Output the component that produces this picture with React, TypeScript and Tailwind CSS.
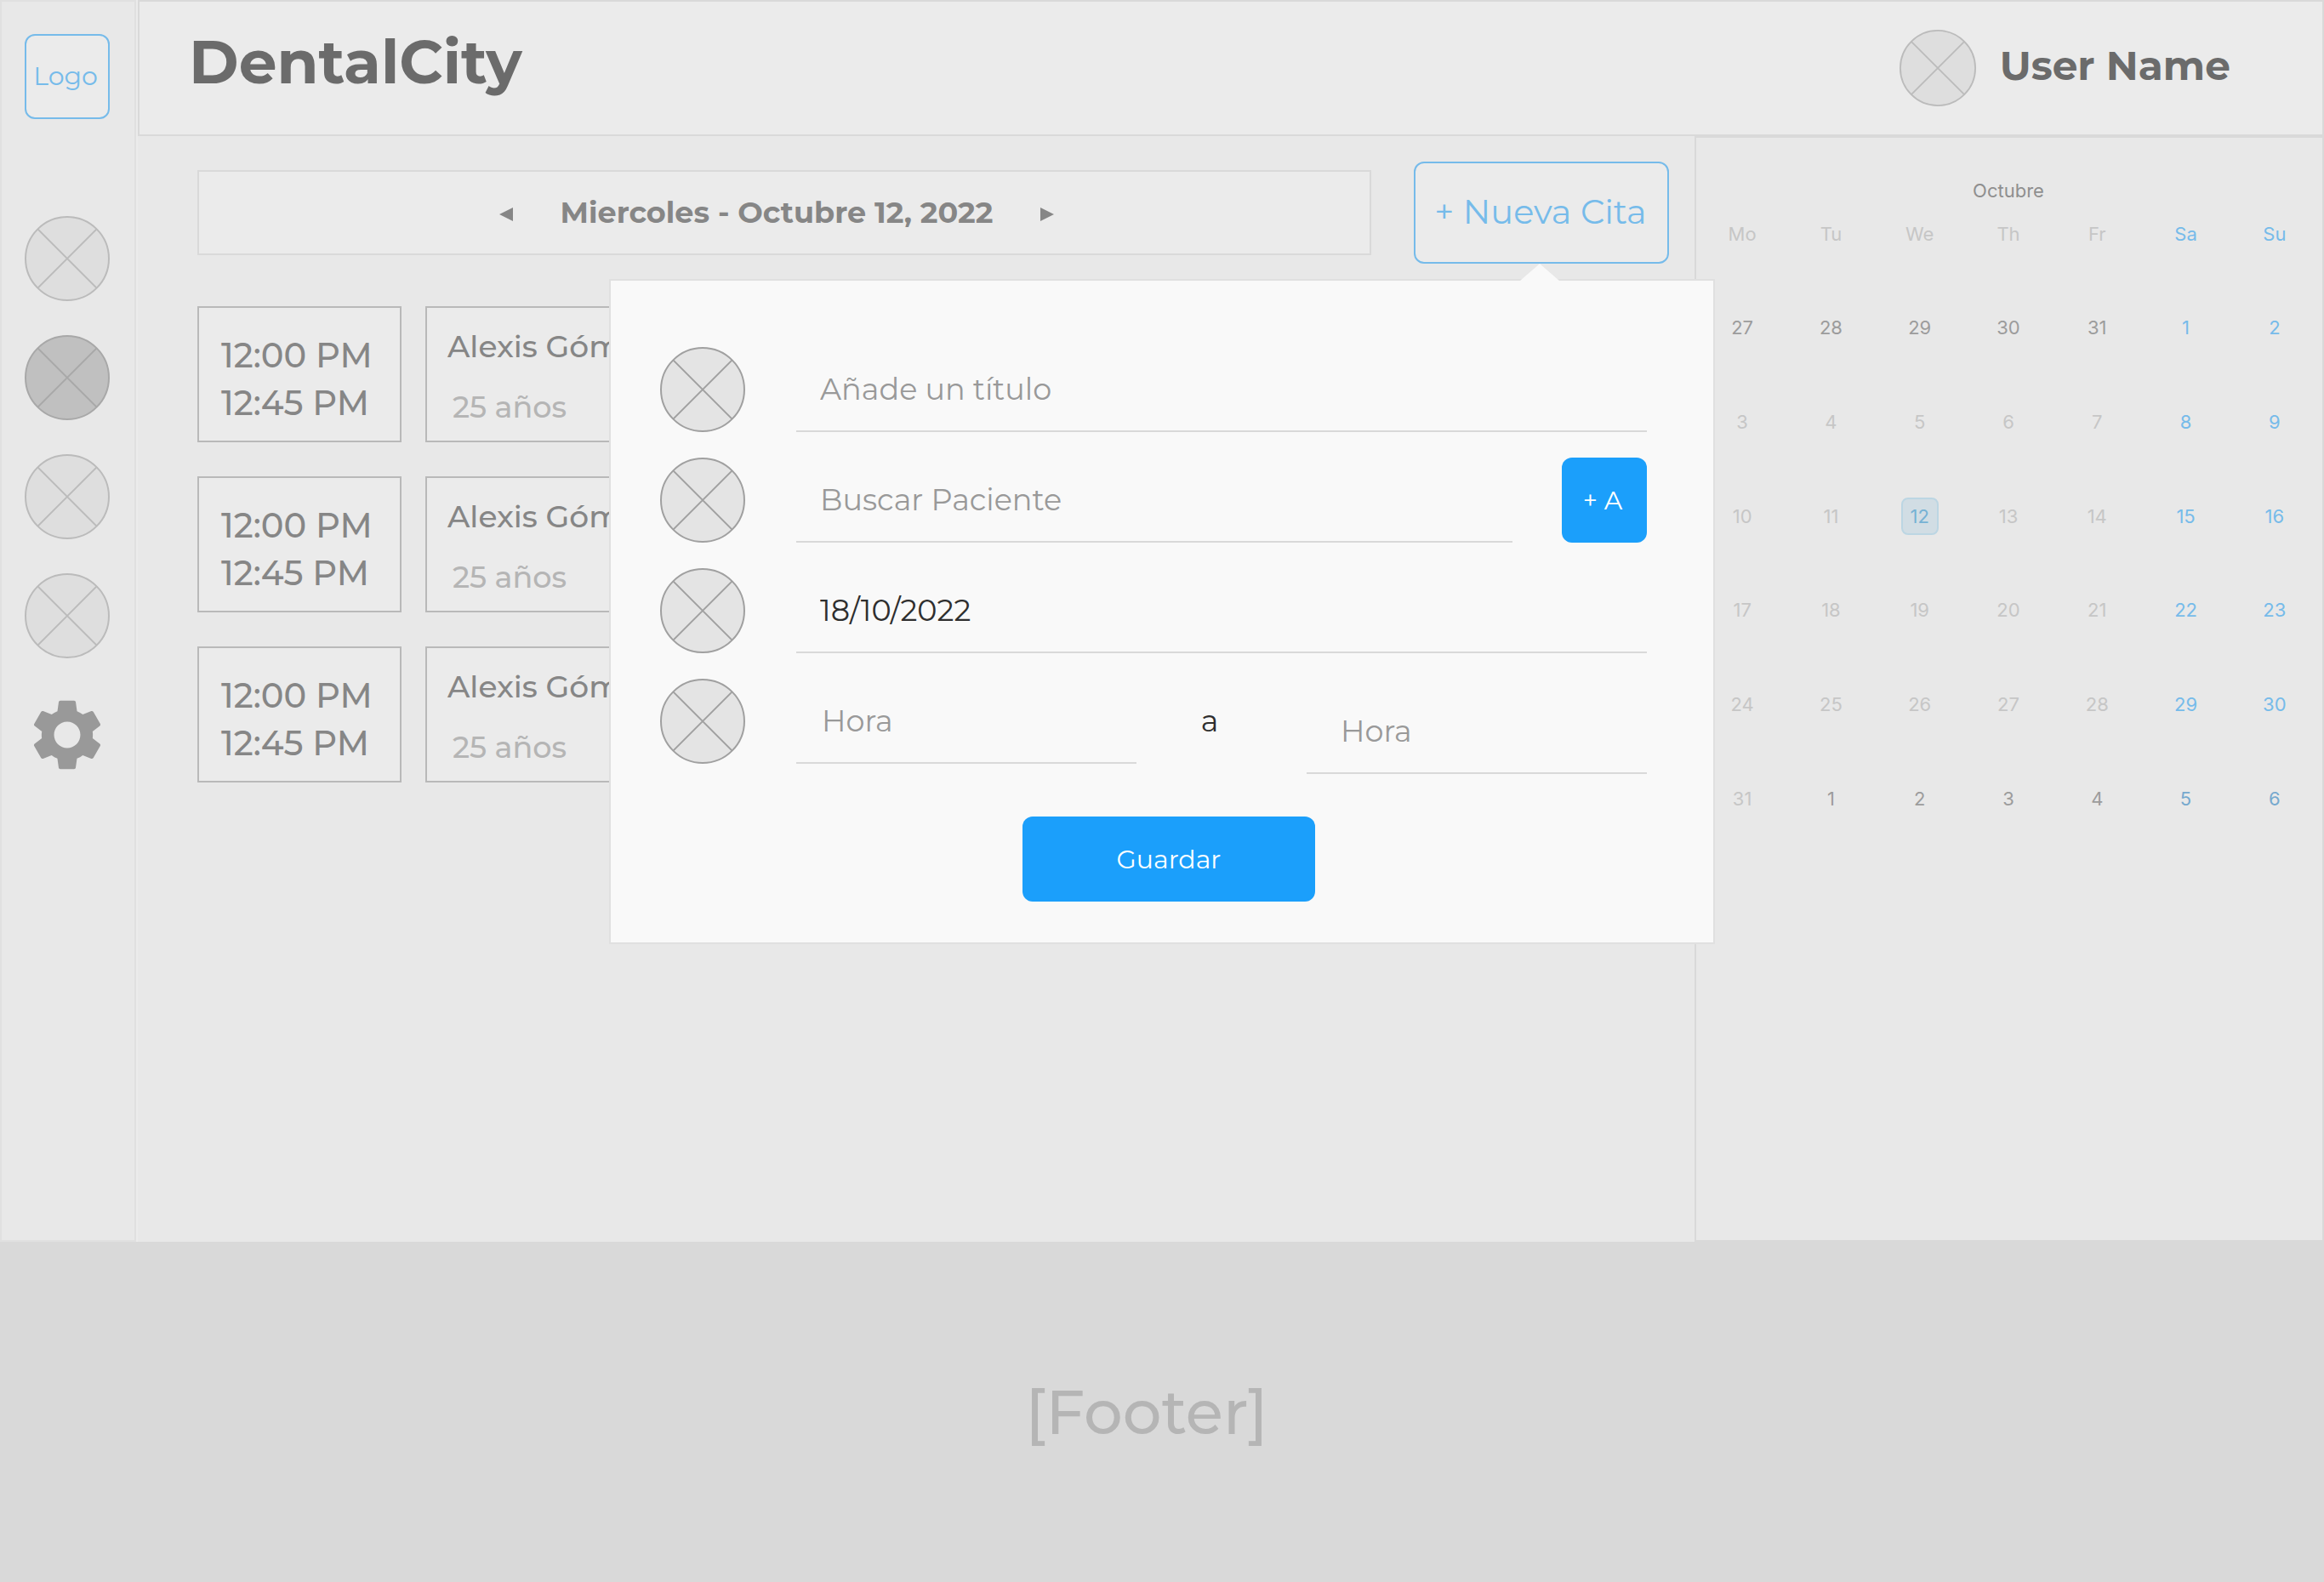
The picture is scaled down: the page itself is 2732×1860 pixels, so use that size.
import React from "react";

type Tone = "muted" | "active" | "form";

const tones: Record<Tone, { fill: string; stroke: string }> = {
  muted: { fill: "#dedede", stroke: "#bbbbbb" },
  active: { fill: "#c0c0c0", stroke: "#a8a8a8" },
  form: { fill: "#e4e4e4", stroke: "#a0a0a0" },
};

function CrossCircle({ tone, className }: { tone: Tone; className: string }) {
  const { fill, stroke } = tones[tone];
  return (
    <svg viewBox="0 0 100 100" className={className} aria-hidden="true">
      <circle cx="50" cy="50" r="49" fill={fill} stroke={stroke} strokeWidth="2" />
      <path d="M15.4 15.4 84.6 84.6M84.6 15.4 15.4 84.6" stroke={stroke} strokeWidth="2" fill="none" />
    </svg>
  );
}

function Gear() {
  return (
    <svg viewBox="2.2 2 19.6 20" className="h-[84px] w-[82px]" fill="#999999" aria-hidden="true">
      <path d="M19.14 12.94c.04-.3.06-.61.06-.94 0-.32-.02-.64-.07-.94l2.03-1.58c.18-.14.23-.41.12-.61l-1.92-3.32c-.12-.22-.37-.29-.59-.22l-2.39.96c-.5-.38-1.03-.7-1.62-.94l-.36-2.54c-.04-.24-.24-.41-.48-.41h-3.84c-.24 0-.43.17-.47.41l-.36 2.54c-.59.24-1.13.57-1.62.94l-2.39-.96c-.22-.08-.47 0-.59.22L2.74 8.87c-.12.21-.08.47.12.61l2.03 1.58c-.05.3-.09.63-.09.94s.02.64.07.94l-2.03 1.58c-.18.14-.23.41-.12.61l1.92 3.32c.12.22.37.29.59.22l2.39-.96c.5.38 1.03.7 1.62.94l.36 2.54c.05.24.24.41.48.41h3.84c.24 0 .44-.17.47-.41l.36-2.54c.59-.24 1.13-.56 1.62-.94l2.39.96c.22.08.47 0 .59-.22l1.92-3.32c.12-.22.07-.47-.12-.61l-2.01-1.58zM12 15.7c-2.04 0-3.7-1.66-3.7-3.7s1.66-3.7 3.7-3.7 3.7 1.66 3.7 3.7-1.66 3.7-3.7 3.7z" />
    </svg>
  );
}

function Sidebar() {
  const items: Tone[] = ["muted", "active", "muted", "muted"];
  return (
    <aside className="flex w-[160px] shrink-0 flex-col items-center border-2 border-[#e0e0e0] bg-[#e8e8e8] pt-[38px] pr-[2px]">
      <a
        href="#"
        className="flex size-[100px] items-center justify-center rounded-xl border-2 border-[#76bbea] bg-[#ebebeb] pr-1 pb-[2px] text-[30px] text-[#76bbea]"
      >
        Logo
      </a>
      <nav className="mt-[114px] flex flex-col items-center gap-10">
        {items.map((tone, i) => (
          <button key={i} type="button" aria-label={`Sección ${i + 1}`} className="size-[100px]">
            <CrossCircle tone={tone} className="size-full" />
          </button>
        ))}
        <button type="button" aria-label="Ajustes" className="flex size-[100px] items-center justify-center">
          <Gear />
        </button>
      </nav>
    </aside>
  );
}

function Header() {
  return (
    <header className="flex h-[160px] shrink-0 items-center justify-between border-2 border-[#d9d9d9] bg-[#ebebeb] pr-[108px] pl-[58px] text-[#6b6b6b]">
      <h1 className="pb-[14px] text-[71px] leading-[90px] font-bold">DentalCity</h1>
      <div className="flex items-center gap-7">
        <CrossCircle tone="muted" className="size-[90px]" />
        <span className="pb-1 text-[47px] leading-[60px] font-bold">User Name</span>
      </div>
    </header>
  );
}

function DateBar() {
  return (
    <div className="flex h-[100px] flex-1 items-center justify-center gap-[56px] border-2 border-[#d9d9d9] bg-[#ebebeb] pr-[18px] text-[#868686]">
      <button type="button" aria-label="Día anterior" className="pt-1">
        <svg viewBox="0 0 16 16" className="size-4" fill="currentColor" aria-hidden="true">
          <path d="M16 0v16L0 8z" />
        </svg>
      </button>
      <span className="text-[35px] leading-[44px] font-bold">Miercoles - Octubre 12, 2022</span>
      <button type="button" aria-label="Día siguiente" className="pt-1">
        <svg viewBox="0 0 16 16" className="size-4" fill="currentColor" aria-hidden="true">
          <path d="M0 0v16l16-8z" />
        </svg>
      </button>
    </div>
  );
}

const fieldClass =
  "h-[100px] min-w-0 border-b-2 border-[#d9d9d9] bg-transparent pr-7 text-[35px] text-[#2e2e2e] outline-none placeholder:text-[#999999]";

function AppointmentForm() {
  return (
    <form
      className="absolute top-[138px] right-[-54px] z-10 flex w-[1300px] flex-col border-2 border-[#e0e0e0] bg-[#f9f9f9] px-[78px] pt-[78px] pb-12 pl-[58px]"
      onSubmit={(e) => e.preventDefault()}
    >
      <svg viewBox="0 0 46 20" className="absolute top-[-20px] right-[181px] h-5 w-[46px]" aria-hidden="true">
        <path d="M23 0 46 20H0z" fill="#f9f9f9" />
      </svg>
      <div className="flex flex-col gap-[30px]">
        <div className="flex gap-[60px]">
          <CrossCircle tone="form" className="size-[100px] shrink-0" />
          <input aria-label="Título" placeholder="Añade un título" className={`${fieldClass} flex-1 pl-7`} />
        </div>
        <div className="flex gap-[60px]">
          <CrossCircle tone="form" className="size-[100px] shrink-0" />
          <div className="flex flex-1 gap-[58px]">
            <input aria-label="Paciente" placeholder="Buscar Paciente" className={`${fieldClass} flex-1 pl-7`} />
            <button type="button" className="size-[100px] rounded-xl bg-[#1b9ffb] pr-1 text-[30px] text-white">
              + A
            </button>
          </div>
        </div>
        <div className="flex gap-[60px]">
          <CrossCircle tone="form" className="size-[100px] shrink-0" />
          <input aria-label="Fecha" defaultValue="18/10/2022" className={`${fieldClass} flex-1 pl-7`} />
        </div>
        <div className="flex h-[100px] gap-[60px]">
          <CrossCircle tone="form" className="size-[100px] shrink-0" />
          <div className="flex flex-1 justify-between">
            <input aria-label="Hora de inicio" placeholder="Hora" className={`${fieldClass} w-[400px] pl-[30px]`} />
            <span className="self-center pr-7 text-[35px] text-[#2e2e2e]">a</span>
            <input aria-label="Hora de fin" placeholder="Hora" className={`${fieldClass} mt-3 w-[400px] pl-10`} />
          </div>
        </div>
      </div>
      <button
        type="submit"
        className="mt-[62px] ml-9 h-[100px] w-[344px] self-center rounded-xl bg-[#1b9ffb] text-[30px] text-white"
      >
        Guardar
      </button>
    </form>
  );
}

const appointments = [
  { start: "12:00 PM", end: "12:45 PM", name: "Alexis Gómez", age: "25 años" },
  { start: "12:00 PM", end: "12:45 PM", name: "Alexis Gómez", age: "25 años" },
  { start: "12:00 PM", end: "12:45 PM", name: "Alexis Gómez", age: "25 años" },
];

function Agenda() {
  return (
    <main className="flex-1 bg-[#e8e8e8] pt-[30px] pr-[30px] pl-[70px]">
      <div className="flex items-center gap-[50px]">
        <DateBar />
        <div className="relative">
          <button
            type="button"
            className="h-[120px] w-[300px] rounded-xl border-2 border-[#76bbea] bg-[#ebebeb] pr-[2px] pb-[2px] text-[40px] whitespace-nowrap text-[#76bbea]"
          >
            + Nueva Cita
          </button>
          <AppointmentForm />
        </div>
      </div>
      <ul className="mt-[50px] mr-[350px] flex flex-col gap-10">
        {appointments.map((item, i) => (
          <li key={i} className="flex h-[160px] gap-7 font-medium text-[#868686]">
            <div className="flex w-[240px] flex-col justify-center border-2 border-[#b9b9b9] bg-[#ebebeb] pt-3 pl-[26px] text-[40px] leading-[56px] whitespace-nowrap">
              <span>{item.start}</span>
              <span>{item.end}</span>
            </div>
            <div className="flex flex-1 flex-col justify-center border-2 border-[#b9b9b9] bg-[#ebebeb] pt-[6px] pl-6 text-[36px] leading-[72px]">
              <span>{item.name}</span>
              <span className="pl-[6px] text-[35px] text-[#b5b5b5]">{item.age}</span>
            </div>
          </li>
        ))}
      </ul>
    </main>
  );
}

const weekDays = ["Mo", "Tu", "We", "Th", "Fr", "Sa", "Su"];
const weeks = [
  [27, 28, 29, 30, 31, 1, 2],
  [3, 4, 5, 6, 7, 8, 9],
  [10, 11, 12, 13, 14, 15, 16],
  [17, 18, 19, 20, 21, 22, 23],
  [24, 25, 26, 27, 28, 29, 30],
  [31, 1, 2, 3, 4, 5, 6],
];

function dayClass(week: number, col: number) {
  const outside = week === 0 || (week === 5 && col > 0);
  if (col > 4) return week === 5 ? "text-[#76a9ce]" : "text-[#76bbea]";
  return outside ? "text-[#9c9c9c]" : "text-[#c6c6c6]";
}

function Calendar() {
  return (
    <section className="w-[740px] shrink-0 border-2 border-[#d9d9d9] bg-[#e8e8e8] pt-11 pr-1 pl-[2px] font-[Inter,sans-serif] text-[22px]">
      <table className="h-[752px] w-full table-fixed text-center">
        <caption className="h-9 leading-9 text-[#8f8f8f]">Octubre</caption>
        <thead>
          <tr className="h-[88px] align-top leading-[66px]">
            {weekDays.map((day, i) => (
              <th key={day} scope="col" className={i > 4 ? "font-normal text-[#76bbea]" : "font-normal text-[#c6c6c6]"}>
                {day}
              </th>
            ))}
          </tr>
        </thead>
        <tbody className="leading-[44px]">
          {weeks.map((week, w) => (
            <tr key={w}>
              {week.map((day, c) => (
                <td key={c} className={dayClass(w, c)}>
                  {w === 2 && c === 2 ? (
                    <button
                      type="button"
                      aria-current="date"
                      className="size-11 rounded-lg border-2 border-[#bcd6e3] bg-[#d1dde4] leading-10 text-[#76b2d4]"
                    >
                      {day}
                    </button>
                  ) : (
                    day
                  )}
                </td>
              ))}
            </tr>
          ))}
        </tbody>
      </table>
    </section>
  );
}

export default function App() {
  return (
    <div className="flex min-h-screen flex-col bg-[#d9d9d9] font-[Montserrat,Inter,sans-serif]">
      <div className="flex flex-1">
        <Sidebar />
        <div className="flex min-w-0 flex-1 flex-col bg-[#ebebeb] pl-[2px]">
          <Header />
          <div className="flex flex-1">
            <Agenda />
            <Calendar />
          </div>
        </div>
      </div>
      <footer className="flex h-[400px] shrink-0 items-center justify-center pr-9 text-[72px] font-medium text-[#b5b5b5]">
        [Footer]
      </footer>
    </div>
  );
}
